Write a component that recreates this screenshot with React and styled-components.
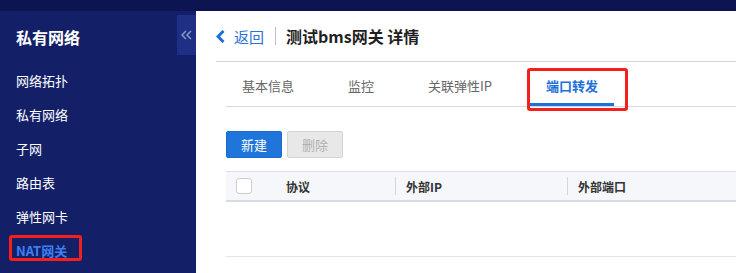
import React from "react";
import styled, { createGlobalStyle } from "styled-components";

const GlobalStyle = createGlobalStyle`
  html, body {
    margin: 0;
    padding: 0;
    background: #ffffff;
    font-family: "Noto Sans CJK SC", "Noto Sans", "Liberation Sans", sans-serif;
  }
  * { box-sizing: border-box; }
`;

const Page = styled.div`
  width: 736px;
  height: 273px;
  display: flex;
  flex-direction: column;
  overflow: hidden;
`;

const TopBar = styled.div`
  height: 11px;
  flex-shrink: 0;
  background: #0c1552;
`;

const Body = styled.div`
  flex: 1;
  display: flex;
  min-height: 0;
`;

const Sidebar = styled.div`
  position: relative;
  width: 196px;
  flex-shrink: 0;
  background: #132068;
  padding-top: 15px;
`;

const SideTitle = styled.div`
  padding-left: 16px;
  height: 22px;
  line-height: 22px;
  font-size: 16px;
  font-weight: 700;
  color: #ffffff;
`;

const SideMenu = styled.ul`
  list-style: none;
  margin: 16px 0 0;
  padding: 0;
`;

const SideItem = styled.li`
  position: relative;
  height: 34px;
  line-height: 34px;
  padding-left: 16px;
  font-size: 13px;
  color: ${(p) => (p.$active ? "#3d7ef0" : "#ffffff")};
  font-weight: ${(p) => (p.$active ? 700 : 400)};
`;

const Marker = styled.span`
  position: absolute;
  left: ${(p) => p.$left}px;
  right: ${(p) => p.$right}px;
  top: ${(p) => p.$top}px;
  bottom: ${(p) => p.$bottom}px;
  border: 3px solid #f4201c;
  border-radius: 3px;
  pointer-events: none;
`;

const Collapse = styled.div`
  position: absolute;
  right: 0;
  top: 4px;
  width: 19px;
  height: 40px;
  background: #1f2f86;
  display: flex;
  align-items: center;
  justify-content: center;
`;

const Main = styled.div`
  flex: 1;
  min-width: 0;
  background: #ffffff;
  padding-left: 20px;
`;

const Header = styled.div`
  height: 51px;
  display: flex;
  align-items: center;
  border-bottom: 1px solid #d4d4d4;
`;

const Back = styled.span`
  display: flex;
  align-items: center;
  gap: 9px;
  color: #2a72d8;
  font-size: 15px;
`;

const Divider = styled.span`
  width: 1px;
  height: 18px;
  background: #bdbdbd;
  margin: 0 10px 0 11px;
`;

const Title = styled.h1`
  margin: 0;
  font-size: 16px;
  font-weight: 700;
  color: #1f1f1f;
`;

const Content = styled.div`
  padding-left: 10px;
`;

const Tabs = styled.div`
  display: flex;
  height: 45px;
  border-bottom: 1px solid #d9d9d9;
`;

const Tab = styled.div`
  position: relative;
  padding: 14px 16px 0;
  margin-right: 22px;
  height: 44px;
  font-size: 13px;
  line-height: 20px;
  color: ${(p) => (p.$active ? "#1e6fd9" : "#666666")};
  font-weight: ${(p) => (p.$active ? 700 : 400)};
  border-bottom: 3px solid ${(p) => (p.$active ? "#1e6fd9" : "transparent")};
`;

const Toolbar = styled.div`
  display: flex;
  gap: 5px;
  margin-top: 24px;
`;

const Button = styled.button`
  width: 56px;
  height: 27px;
  padding: 0;
  font-family: inherit;
  font-size: 13px;
  border-radius: 2px;
  border: 1px solid ${(p) => (p.$primary ? "#1a6ad2" : "#d3d3d3")};
  background: ${(p) => (p.$primary ? "#1f75da" : "#e8e8e8")};
  color: ${(p) => (p.$primary ? "#ffffff" : "#b0b0b0")};
`;

const Table = styled.div`
  margin-top: 13px;
`;

const HeadRow = styled.div`
  display: flex;
  height: 31px;
  background: #f5f7fa;
  border-top: 1px solid #dcdfe8;
  border-bottom: 2px solid #d8dbe4;
`;

const HeadCell = styled.div`
  position: relative;
  display: flex;
  align-items: center;
  width: ${(p) => (p.$w ? `${p.$w}px` : "auto")};
  flex: ${(p) => (p.$w ? "none" : 1)};
  padding-left: ${(p) => p.$pad}px;
  font-size: 12px;
  font-weight: 700;
  color: #333333;
  ${(p) =>
    p.$sep &&
    `&::before {
      content: "";
      position: absolute;
      left: 0;
      top: 5px;
      bottom: 5px;
      width: 1px;
      background: #d3d6dd;
    }`}
`;

const Check = styled.span`
  width: 16px;
  height: 16px;
  border: 1px solid #cccccc;
  border-radius: 3px;
  background: #ffffff;
`;

const EmptyRow = styled.div`
  height: 55px;
  border-bottom: 1px solid #e3e6ee;
`;

const menu = ["网络拓扑", "私有网络", "子网", "路由表", "弹性网卡", "NAT网关"];
const tabs = ["基本信息", "监控", "关联弹性IP", "端口转发"];

export default function App() {
  return (
    <Page>
      <GlobalStyle />
      <TopBar />
      <Body>
        <Sidebar>
          <SideTitle>私有网络</SideTitle>
          <SideMenu>
            {menu.map((m, i) => (
              <SideItem key={m} $active={i === menu.length - 1}>
                {m}
                {i === menu.length - 1 && (
                  <Marker $left={9} $right={114} $top={1} $bottom={7} />
                )}
              </SideItem>
            ))}
          </SideMenu>
          <Collapse>
            <svg width="11" height="10" viewBox="0 0 11 10">
              <polyline points="5,1 1,5 5,9" fill="none" stroke="#8b95c6" strokeWidth="1.5" />
              <polyline points="10,1 6,5 10,9" fill="none" stroke="#8b95c6" strokeWidth="1.5" />
            </svg>
          </Collapse>
        </Sidebar>
        <Main>
          <Header>
            <Back>
              <svg width="9" height="13" viewBox="0 0 9 13">
                <polyline points="7.5,1 2,6.5 7.5,12" fill="none" stroke="#1a6fd0" strokeWidth="3" />
              </svg>
              返回
            </Back>
            <Divider />
            <Title>测试bms网关 详情</Title>
          </Header>
          <Content>
            <Tabs>
              {tabs.map((t, i) => (
                <Tab key={t} $active={i === tabs.length - 1}>
                  {t}
                  {i === tabs.length - 1 && (
                    <Marker $left={-3} $right={-14} $top={6} $bottom={-8} />
                  )}
                </Tab>
              ))}
            </Tabs>
            <Toolbar>
              <Button $primary>新建</Button>
              <Button>删除</Button>
            </Toolbar>
            <Table>
              <HeadRow>
                <HeadCell $w={50} $pad={10}>
                  <Check />
                </HeadCell>
                <HeadCell $w={119} $pad={10}>协议</HeadCell>
                <HeadCell $w={172} $pad={11} $sep>外部IP</HeadCell>
                <HeadCell $pad={11} $sep>外部端口</HeadCell>
              </HeadRow>
              <EmptyRow />
            </Table>
          </Content>
        </Main>
      </Body>
    </Page>
  );
}
